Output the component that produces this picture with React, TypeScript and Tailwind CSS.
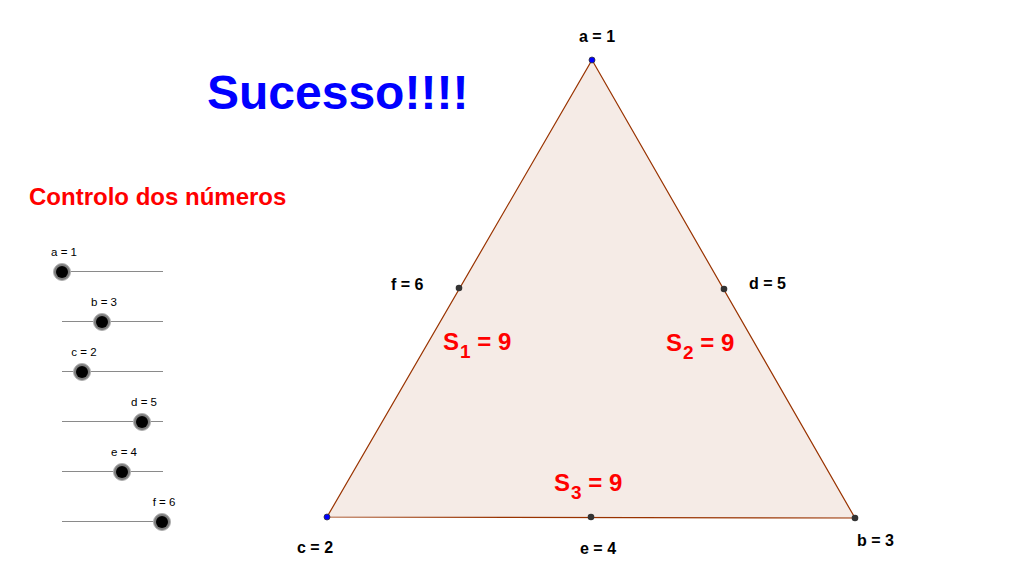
const font = { fontFamily: '"Liberation Sans", Arial, sans-serif' };

const sliders = [
  { name: "a", value: 1 },
  { name: "b", value: 3 },
  { name: "c", value: 2 },
  { name: "d", value: 5 },
  { name: "e", value: 4 },
  { name: "f", value: 6 },
];

function Slider({ name, value }: { name: string; value: number }) {
  const x = (value - 1) * 20;
  return (
    <div className="relative h-[50px] w-[101px]">
      <span
        className="absolute top-[12px] -translate-x-1/2 whitespace-nowrap text-[11.5px] leading-none text-black"
        style={{ left: x + 2 }}
      >
        {name} = {value}
      </span>
      <div className="absolute left-0 right-0 top-[36px] h-px bg-[#8a8a8a]" />
      <div
        className="absolute top-[28px] flex h-[18px] w-[18px] -translate-x-1/2 items-center justify-center rounded-full border border-[#b0b0b0] bg-[#7c7c7c]"
        style={{ left: x }}
      >
        <div className="h-[12px] w-[12px] rounded-full bg-black" />
      </div>
    </div>
  );
}

function Label({ text, className }: { text: string; className: string }) {
  return (
    <span className={`absolute whitespace-nowrap text-[16px] font-bold leading-none text-black ${className}`}>
      {text}
    </span>
  );
}

function Sum({ n, className }: { n: number; className: string }) {
  return (
    <span className={`absolute whitespace-nowrap text-[24px] font-bold leading-none text-[#ff0000] ${className}`}>
      S<sub className="relative top-[8px] ml-px align-baseline text-[19px]">{n}</sub> = 9
    </span>
  );
}

export default function App() {
  return (
    <div className="relative h-[572px] w-[1032px] overflow-hidden bg-white" style={font}>
      <svg className="absolute inset-0" width="1032" height="572" viewBox="0 0 1032 572">
        <polygon points="592,60 855,518 327,517" fill="#f5ebe6" stroke="#993300" strokeWidth="1.2" />
        <circle cx="592" cy="60" r="3" fill="#0000ff" stroke="#333" strokeWidth="0.8" />
        <circle cx="327" cy="517" r="3" fill="#0000ff" stroke="#333" strokeWidth="0.8" />
        <circle cx="459" cy="288" r="3.3" fill="#333" />
        <circle cx="724" cy="289" r="3.3" fill="#333" />
        <circle cx="591" cy="517" r="3.3" fill="#333" />
        <circle cx="855" cy="518" r="3.3" fill="#333" />
      </svg>

      <div className="relative pl-[29px] pt-[185px]">
        <h2 className="text-[24px] font-bold leading-none text-[#ff0000]">Controlo dos números</h2>
        <div className="ml-[33px] mt-[26px] flex flex-col">
          {sliders.map((s) => (
            <Slider key={s.name} name={s.name} value={s.value} />
          ))}
        </div>
      </div>

      <h1 className="absolute left-[207px] top-[69px] text-[48px] font-bold leading-none text-[#0000ff]">
        Sucesso!!!!
      </h1>

      <Label text="a = 1" className="left-[579px] top-[29px]" />
      <Label text="f = 6" className="left-[391px] top-[277px]" />
      <Label text="d = 5" className="left-[749px] top-[276px]" />
      <Label text="c = 2" className="left-[297px] top-[540px]" />
      <Label text="e = 4" className="left-[580px] top-[541px]" />
      <Label text="b = 3" className="left-[857px] top-[533px]" />

      <Sum n={1} className="left-[443px] top-[330px]" />
      <Sum n={2} className="left-[666px] top-[331px]" />
      <Sum n={3} className="left-[554px] top-[471px]" />
    </div>
  );
}
